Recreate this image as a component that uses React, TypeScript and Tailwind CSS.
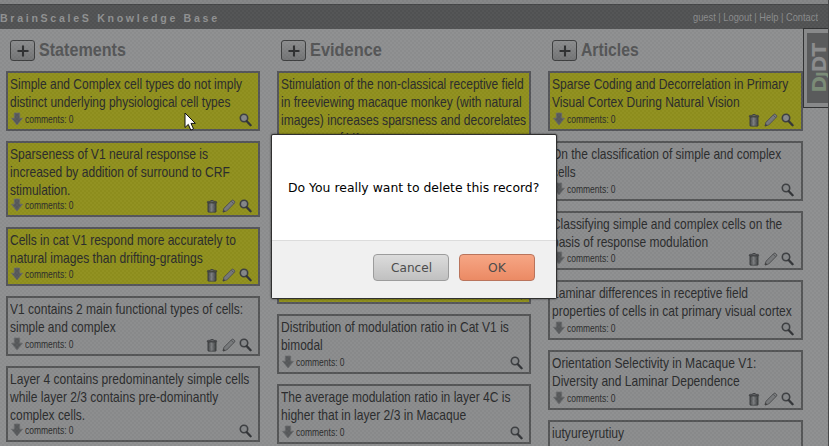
import { useLayoutEffect, useRef, useState } from "react";

type LineData = [string, number];
type CardData = { lines: LineData[]; yellow?: boolean; edit?: boolean };

// One line of text, condensed horizontally to the given width.
function Fit({ text, width }: { text: string; width: number }) {
  const ref = useRef<HTMLSpanElement>(null);
  const [scale, setScale] = useState(1);
  useLayoutEffect(() => {
    if (ref.current && ref.current.offsetWidth) setScale(width / ref.current.offsetWidth);
  }, [text, width]);
  return (
    <span className="block whitespace-nowrap" style={{ width }}>
      <span ref={ref} className="inline-block origin-left whitespace-nowrap" style={{ transform: `scaleX(${scale})` }}>
        {text}
      </span>
    </span>
  );
}

function Arrow() {
  return (
    <svg width="12" height="14" viewBox="0 0 12 14">
      <path d="M3.3 1h5.4v5.2h2.8L6 13 .5 6.2h2.8z" fill="#57595b" stroke="#6a6c6e" strokeWidth=".8" />
    </svg>
  );
}

function Trash() {
  return (
    <svg width="12" height="14" viewBox="0 0 12 14">
      <defs>
        <linearGradient id="bin">
          <stop offset="0" stopColor="#414345" />
          <stop offset=".45" stopColor="#7d7f81" />
          <stop offset="1" stopColor="#3c3e40" />
        </linearGradient>
      </defs>
      <path d="M1.9 4h8.2v8.4q0 .8-.8.8H2.7q-.8 0-.8-.8z" fill="url(#bin)" stroke="#3a3c3e" strokeWidth=".7" />
      <path d="M1.2 3.6q0-1.2 1-1.2h2.2l.4-.9h2.4l.4.9h2.2q1 0 1 1.2z" fill="#606264" stroke="#37393b" strokeWidth=".8" />
    </svg>
  );
}

function Pencil() {
  return (
    <svg width="14" height="14" viewBox="0 0 14 14">
      <path d="M1 13l1-3.8 7.8-7.8q.9-.7 1.8.1l.8.8q.8.9.1 1.8L4.7 12z" fill="#77797b" stroke="#4d4e50" strokeWidth=".9" />
      <path d="M9.2 2.2l2.5 2.5" stroke="#505254" strokeWidth=".8" />
      <path d="M1 13l.6-2 1.4 1.4z" fill="#333" stroke="#444" strokeWidth=".5" />
    </svg>
  );
}

function Magnifier() {
  return (
    <svg width="13" height="14" viewBox="0 0 13 14">
      <circle cx="5" cy="5" r="3.7" fill="#858789" stroke="#3d3f42" strokeWidth="1.6" />
      <path d="M7.8 8.2l3.8 4" stroke="#333538" strokeWidth="2.3" strokeLinecap="round" />
    </svg>
  );
}

function Card({ card }: { card: CardData }) {
  const n = card.lines.length;
  const height = n === 4 ? "h-[93.8px]" : n === 3 ? "h-[75.8px]" : "h-[59.8px]";
  const tone = card.yellow ? "bg-[#90901e] border-[#55565a]" : "bg-[#8b8c8d] border-[#555657]";
  return (
    <div className={`flex shrink-0 flex-col justify-between border-2 ${height} ${tone}`}>
      <div className="pt-[2px] pl-[2px] text-[15px] leading-[17.9px] text-[#2b2c2d]">
        {card.lines.map(([t, w]) => (
          <Fit key={t} text={t} width={w} />
        ))}
      </div>
      <div className="-mt-1 flex h-[17px] shrink-0 items-start pr-[6.5px] pl-[3px]">
        <Arrow />
        <div className="ml-[2.2px] text-[10.5px] leading-[14px] text-[#2b2c2d]">
          <Fit text="comments: 0" width={48.5} />
        </div>
        <div className="ml-auto flex gap-[3.3px] pt-px">
          {card.edit && <Trash />}
          {card.edit && <Pencil />}
          <Magnifier />
        </div>
      </div>
    </div>
  );
}

const columns: { title: string; width: number; cards: CardData[] }[] = [
  {
    title: "Statements",
    width: 86.5,
    cards: [
      { yellow: true, lines: [["Simple and Complex cell types do not imply", 232], ["distinct underlying physiological cell types", 220.5]] },
      { yellow: true, edit: true, lines: [["Sparseness of V1 neural response is", 198], ["increased by addition of surround to CRF", 219.5], ["stimulation.", 60.5]] },
      { yellow: true, edit: true, lines: [["Cells in cat V1 respond more accurately to", 226], ["natural images than drifting-gratings", 192.5]] },
      { edit: true, lines: [["V1 contains 2 main functional types of cells:", 233], ["simple and complex", 106]] },
      { lines: [["Layer 4 contains predominantely simple cells", 239], ["while layer 2/3 contains pre-dominantly", 208], ["complex cells.", 75]] },
    ],
  },
  {
    title: "Evidence",
    width: 71.5,
    cards: [
      { yellow: true, lines: [["Stimulation of the non-classical receptive field", 243], ["in freeviewing macaque monkey (with natural", 240.5], ["images) increases sparsness and decorelates", 245], ["response of V1", 80]] },
      { yellow: true, lines: [] },
      { yellow: true, lines: [] },
      { lines: [["Distribution of modulation ratio in Cat V1 is", 227.5], ["bimodal", 42]] },
      { lines: [["The average modulation ratio in layer 4C is", 229.5], ["higher that in layer 2/3 in Macaque", 185]] },
    ],
  },
  {
    title: "Articles",
    width: 58,
    cards: [
      { yellow: true, edit: true, lines: [["Sparse Coding and Decorrelation in Primary", 236], ["Visual Cortex During Natural Vision", 188]] },
      { lines: [["On the classification of simple and complex", 229.5], ["cells", 23.5]] },
      { edit: true, lines: [["Classifying simple and complex cells on the", 230], ["basis of response modulation", 156]] },
      { lines: [["Laminar differences in receptive field", 196], ["properties of cells in cat primary visual cortex", 239.5]] },
      { edit: true, lines: [["Orientation Selectivity in Macaque V1:", 204], ["Diversity and Laminar Dependence", 187.5]] },
      { lines: [["iutyureyrutiuy", 72]] },
    ],
  },
];

export default function App() {
  return (
    <div className="relative h-[446px] w-[829px] overflow-hidden bg-[#8e8f90] font-['Liberation_Sans',Arial,sans-serif]">
      <div className="h-[4px] bg-[#848586]" />
      <header className="flex h-[25px] items-center justify-between border-t border-[#454647] bg-[#525354] pr-[11px]">
        <div className="pt-[3px] text-[11.5px] font-bold tracking-[2.9px] text-[#909192]">
          <Fit text="BrainScaleS Knowledge Base" width={220} />
        </div>
        <div className="pt-px text-[11px] text-[#8b8c8d]">
          <Fit text="guest | Logout | Help | Contact" width={125} />
        </div>
      </header>
      <main className="flex gap-[16.8px] pl-[6.1px]">
        {columns.map((col) => (
          <section key={col.title} className="w-[254.3px] shrink-0">
            <div className="flex h-[42px] items-start pt-[11px] pl-[4px]">
              <div className="flex h-[21px] w-[25px] items-center justify-center rounded-[3px] border border-[#3e3f40] bg-linear-to-b from-[#8c8d8e] to-[#747576]">
                <svg width="12" height="12" viewBox="0 0 12 12">
                  <path d="M6 .5v11M.5 6h11" stroke="#303132" strokeWidth="2.1" />
                </svg>
              </div>
              <div className="ml-[4.2px] text-[19px] leading-[20px] font-bold text-[#555657]">
                <Fit text={col.title} width={col.width} />
              </div>
            </div>
            <div className="flex flex-col gap-[10px]">
              {col.cards.map((c, i) => (
                <Card key={i} card={c} />
              ))}
            </div>
          </section>
        ))}
      </main>

      <div className="pointer-events-none absolute inset-0 bg-[repeating-conic-gradient(#00000006_0_25%,#ffffff04_0_50%)] bg-[length:4px_4px]" />

      <div className="absolute top-[28px] left-[803px] flex h-[80px] w-[27px] items-stretch border border-[#323334] bg-[#88898a] py-[4px] pl-[3px]">
        <div className="flex w-full items-center justify-center bg-[#5a5b5c] pl-[3px]">
          <div className="-rotate-90 text-[20px] leading-none font-bold tracking-[-0.8px] whitespace-nowrap text-[#8b8c8d] font-['DejaVu_Sans',sans-serif]">
            <span className="text-[#7b8b77]">D<span className="text-[14px]">J</span></span>DT
          </div>
        </div>
      </div>
      <div className="absolute top-0 right-0 h-full w-px bg-[#48494a]" />

      <svg className="absolute top-[112px] left-[184px]" width="13" height="20" viewBox="0 0 13 20">
        <path d="M1 1v14.5l3.3-3.1 2.5 5.7 2.7-1.2L7 11.4h4.4z" fill="#fff" stroke="#111" strokeWidth="1" />
      </svg>

      <div className="absolute top-[134px] left-[271px] flex h-[165px] w-[286px] flex-col rounded-[2px] border border-[#303030] bg-white text-black font-['DejaVu_Sans',sans-serif] shadow-[0_0_2px_#000a]">
        <div className="flex h-[106px] items-center border-b border-[#dcdcdc] pl-[15.8px] text-[13px]">
          <Fit text="Do You really want to delete this record?" width={251} />
        </div>
        <div className="flex grow items-start justify-end gap-[10px] bg-[#f0f0f0] pt-[13px] pr-[21px] text-[13px] text-[#4c4c4c]">
          <div className="flex h-[27px] w-[76px] items-center justify-center rounded-[4px] border border-[#9c9c9c] bg-linear-to-b from-[#dcdcdc] to-[#c0c0c0]">
            <Fit text="Cancel" width={41} />
          </div>
          <div className="flex h-[27px] w-[76px] items-center justify-center rounded-[4px] border border-[#b9745c] bg-linear-to-b from-[#f6a685] to-[#eb8a64]">
            <Fit text="OK" width={18} />
          </div>
        </div>
      </div>
    </div>
  );
}
